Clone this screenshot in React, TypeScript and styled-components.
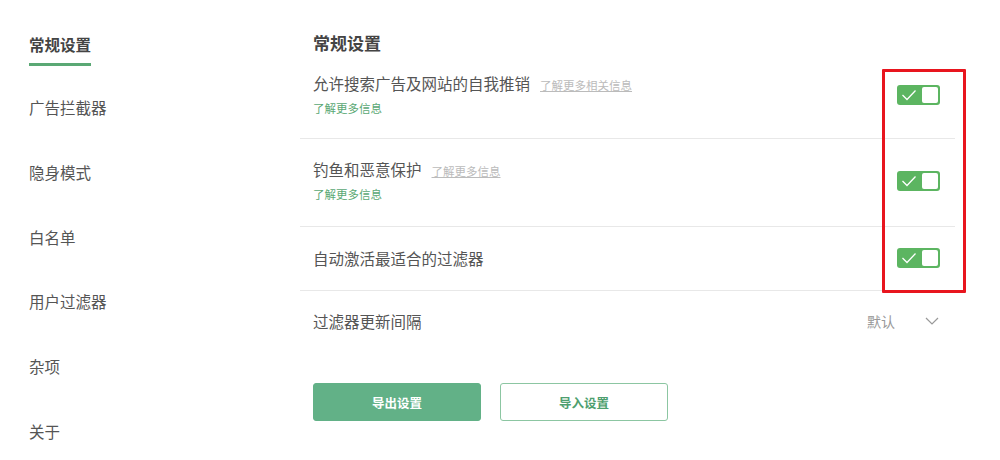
import { useState } from 'react';
import styled, { createGlobalStyle } from 'styled-components';

const GlobalStyle = createGlobalStyle`
  html, body {
    margin: 0;
    padding: 0;
    background: #fff;
  }
  body {
    font-family: "Noto Sans CJK SC", "Liberation Sans", sans-serif;
    color: #555;
  }
`;

const Page = styled.div`
  display: flex;
  width: 1000px;
  height: 460px;
  overflow: hidden;
`;

const Sidebar = styled.nav`
  width: 300px;
  flex-shrink: 0;
  display: flex;
  flex-direction: column;
  padding: 33px 0 0 29px;
  box-sizing: border-box;
`;

const NavItem = styled.div<{ $active?: boolean }>`
  flex-shrink: 0;
  align-self: flex-start;
  font-size: 15.5px;
  line-height: 22px;
  height: ${({ $active }) => ($active ? 63 : 64.8)}px;
  box-sizing: border-box;
  color: ${({ $active }) => ($active ? '#444' : '#555')};
  font-weight: ${({ $active }) => ($active ? 700 : 400)};
  cursor: pointer;

  span {
    display: inline-block;
    padding-bottom: 8px;
    border-bottom: 3px solid ${({ $active }) => ($active ? '#5aa874' : 'transparent')};
  }
`;

const Main = styled.main`
  width: 655px;
  display: flex;
  flex-direction: column;
  padding-top: 33px;
`;

const Title = styled.h2`
  margin: 0 0 0 13px;
  font-size: 17px;
  line-height: 20px;
  font-weight: 700;
  color: #444;
`;

const Content = styled.div`
  position: relative;
  display: flex;
  flex-direction: column;
`;

const Row = styled.div<{ $top?: number; $bottom?: number; $last?: boolean }>`
  display: flex;
  align-items: center;
  justify-content: space-between;
  padding: ${({ $top }) => $top ?? 22}px 14px ${({ $bottom }) => $bottom ?? 22}px 13px;
  border-bottom: 1px solid ${({ $last }) => ($last ? 'transparent' : '#e8e8e8')};
`;

const RowText = styled.div`
  display: flex;
  flex-direction: column;
`;

const Label = styled.div`
  font-size: 15.5px;
  line-height: 22px;
  color: #555;
  display: flex;
  align-items: baseline;
`;

const MutedLink = styled.a`
  margin-left: 10px;
  font-size: 11.5px;
  color: #bbb;
  text-decoration: underline;
  cursor: pointer;
`;

const GreenLink = styled.a`
  margin-top: 3px;
  font-size: 11.5px;
  line-height: 18px;
  color: #5aa874;
  cursor: pointer;
`;

const Toggle = styled.button<{ $on: boolean }>`
  position: relative;
  width: 43px;
  height: 20px;
  padding: 0;
  border: none;
  border-radius: 3px;
  background: ${({ $on }) => ($on ? '#5cb561' : '#ccc')};
  cursor: pointer;
  display: flex;
  align-items: center;
  margin-right: 1px;

  svg {
    margin-left: 4px;
  }
`;

const Knob = styled.span`
  position: absolute;
  right: 2px;
  top: 2px;
  width: 16px;
  height: 16px;
  border-radius: 2px;
  background: #fff;
`;

const Highlight = styled.div`
  position: absolute;
  left: 582px;
  top: 16px;
  width: 78px;
  height: 218px;
  border: 3px solid #e8151e;
  border-radius: 1px;
  pointer-events: none;
`;

const SelectValue = styled.div`
  display: flex;
  align-items: center;
  gap: 30px;
  font-size: 14px;
  color: #999;
  margin-right: 2px;
`;

const Buttons = styled.div`
  display: flex;
  gap: 19px;
  padding: 30px 0 0 13px;
`;

const Button = styled.button<{ $primary?: boolean }>`
  width: 168px;
  height: 38px;
  border-radius: 3px;
  border: 1px solid ${({ $primary }) => ($primary ? '#62b187' : '#8cc6a2')};
  background: ${({ $primary }) => ($primary ? '#62b187' : '#fff')};
  color: ${({ $primary }) => ($primary ? '#fff' : '#4e9f6f')};
  font-family: "Noto Sans CJK SC", "Liberation Sans", sans-serif;
  font-size: 12.5px;
  font-weight: 700;
  cursor: pointer;
`;

const Check = () => (
  <svg width="16" height="12" viewBox="0 0 16 12" fill="none">
    <path d="M1.5 6 L6 10.5 L14.5 1.5" stroke="#fff" strokeWidth="1.3" />
  </svg>
);

const Chevron = () => (
  <svg width="14" height="8" viewBox="0 0 14 8" fill="none">
    <path d="M1 1 L7 7 L13 1" stroke="#999" strokeWidth="1.2" />
  </svg>
);

const navItems = ['常规设置', '广告拦截器', '隐身模式', '白名单', '用户过滤器', '杂项', '关于'];

export default function App() {
  const [toggles, setToggles] = useState([true, true, true]);
  const flip = (i: number) => setToggles(t => t.map((v, j) => (j === i ? !v : v)));

  const renderToggle = (i: number) => (
    <Toggle $on={toggles[i]} onClick={() => flip(i)}>
      {toggles[i] && <Check />}
      <Knob />
    </Toggle>
  );

  return (
    <>
      <GlobalStyle />
      <Page>
        <Sidebar>
          {navItems.map((item, i) => (
            <NavItem key={item} $active={i === 0}>
              <span>{item}</span>
            </NavItem>
          ))}
        </Sidebar>
        <Main>
          <Title>常规设置</Title>
          <Content>
            <Row $top={19} $bottom={21}>
              <RowText>
                <Label>
                  允许搜索广告及网站的自我推销
                  <MutedLink>了解更多相关信息</MutedLink>
                </Label>
                <GreenLink>了解更多信息</GreenLink>
              </RowText>
              {renderToggle(0)}
            </Row>
            <Row $top={19} $bottom={23}>
              <RowText>
                <Label>
                  钓鱼和恶意保护
                  <MutedLink>了解更多信息</MutedLink>
                </Label>
                <GreenLink>了解更多信息</GreenLink>
              </RowText>
              {renderToggle(1)}
            </Row>
            <Row $top={20} $bottom={21}>
              <RowText>
                <Label>自动激活最适合的过滤器</Label>
              </RowText>
              {renderToggle(2)}
            </Row>
            <Row $top={19} $bottom={20} $last>
              <RowText>
                <Label>过滤器更新间隔</Label>
              </RowText>
              <SelectValue>
                默认
                <Chevron />
              </SelectValue>
            </Row>
            <Highlight />
          </Content>
          <Buttons>
            <Button $primary>导出设置</Button>
            <Button>导入设置</Button>
          </Buttons>
        </Main>
      </Page>
    </>
  );
}
